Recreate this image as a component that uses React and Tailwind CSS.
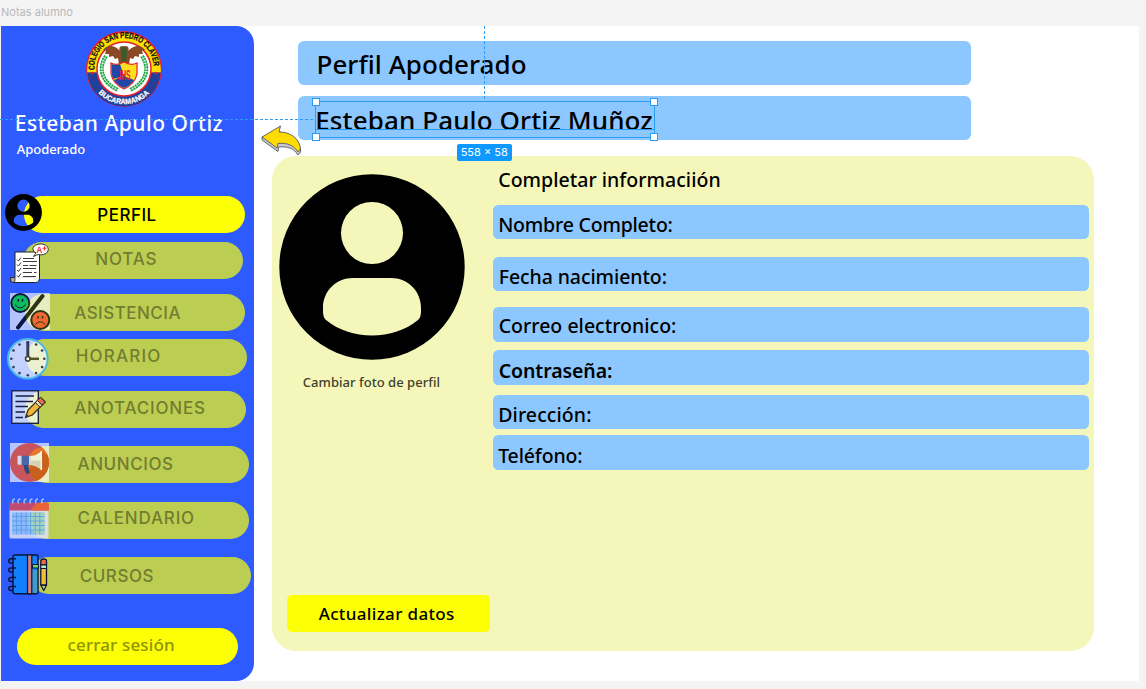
import React from "react";

function AvatarIcon({ className }) {
  return (
    <svg viewBox="0 0 186 186" className={className} fill="#000">
      <path
        fillRule="evenodd"
        d="M93 .3a92.7 92.7 0 1 0 0 185.4A92.7 92.7 0 0 0 93 .3ZM93 28a31 31 0 1 1 0 62a31 31 0 0 1 0-62ZM44 138V134C44 117 57 104 74 104H112C129 104 142 117 142 134V138Q142 143 139 146C127 156 110 161.5 93 161.5C76 161.5 59 156 47 146Q44 143 44 138Z"
      />
    </svg>
  );
}

function Crest() {
  return (
    <svg viewBox="0 0 78 78" className="h-[78px] w-[78px]">
      <circle cx="39" cy="39" r="38" fill="#e8202c" />
      <path d="M2.3 42.5A36.8 36.8 0 1 1 75.7 42.5Z" fill="#ffe000" />
      <path d="M2.3 42.5A36.8 36.8 0 0 0 75.7 42.5Z" fill="#20409a" />
      <circle cx="39" cy="39" r="27.8" fill="#e8202c" />
      <circle cx="39" cy="39" r="26.3" fill="#fff" />
      <circle cx="7" cy="43" r="1.3" fill="#e8202c" />
      <circle cx="71" cy="43" r="1.3" fill="#e8202c" />
      <defs>
        <path id="crest-top" d="M9.6 41A29.6 29.6 0 1 1 68.4 41" />
        <path id="crest-bottom" d="M6.5 52.500A35.200 35.200 0 0 0 71.500 52.500" />
      </defs>
      <text fontFamily="Liberation Sans Narrow, Liberation Sans, sans-serif" fontWeight="700" fontSize="8.4" fill="#111" stroke="#111" strokeWidth=".3">
        <textPath href="#crest-top" startOffset="1" textLength="94" lengthAdjust="spacingAndGlyphs">COLEGIO SAN PEDRO CLAVER</textPath>
      </text>
      <text fontFamily="Liberation Sans Narrow, Liberation Sans, sans-serif" fontWeight="700" fontSize="7.6" fill="#fff" stroke="#fff" strokeWidth=".2">
        <textPath href="#crest-bottom" startOffset="12.500" textLength="57" lengthAdjust="spacingAndGlyphs">BUCARAMANGA</textPath>
      </text>
      <g fill="none" stroke="#1fa345" strokeWidth="4" strokeDasharray="2.200 0.6">
        <path d="M21 26C13 38 16 52 33 60" />
        <path d="M57 26C65 38 62 52 45 60" />
      </g>
      <g fill="none" stroke="#fff" strokeWidth=".6">
        <path d="M21 26C13 38 16 52 33 60" />
        <path d="M57 26C65 38 62 52 45 60" />
      </g>
      <path d="M39 17C42 14 45 18 43 21C49 15 56 14 60 20L57 21L58 24L54 24L54 27L50 26L48 29L45 28L44 35H34L33 28L30 29L28 26L24 27L24 24L20 24L21 21L18 20C22 14 30 15 35 21C33 18 36 14 39 17Z" fill="#8a4a26" />
      <path d="M39 16Q42 17 42 23L41 33H37L36 23Q36 17 39 16Z" fill="#3d5a2a" />
      <path d="M26 33Q32 36 39 32Q46 36 52 33V44Q50 54 39 59Q28 54 26 44Z" fill="#ffdf1b" stroke="#e8202c" strokeWidth="1.2" />
      <path d="M26.6 34Q32 36 35 34L39 46L28.5 49Q26.6 46 26.6 42Z" fill="#2446a8" />
      <path d="M39 46L49 50Q46 55 39 58Q32 55 29 50Z" fill="#2446a8" />
      <text x="39" y="50" textAnchor="middle" fontFamily="Liberation Sans, sans-serif" fontWeight="700" fontSize="14" textLength="13" lengthAdjust="spacingAndGlyphs" fill="#e8202c">JHS</text>
    </svg>
  );
}

function GradesIcon() {
  return (
    <svg viewBox="0 0 40 41" className="h-[41px] w-10" stroke="#222" strokeLinejoin="round">
      <path d="M5 9H29.5V34Q29.5 39.5 25.5 39.5H3Q.7 39.5 .7 37V34.5H5Z" fill="#fff" strokeWidth="1" />
      <path d="M.7 34.5H5V37.5Q4.5 39.5 3 39.5Q.7 39.5 .7 37Z" fill="#aaa" strokeWidth=".8" />
      <path d="M5 34.5H24Q26 39.5 28.5 38" fill="none" strokeWidth=".4" stroke="#bbb" />
      <path d="M23.5 13.5L26 10C20 6.500 23.500 1 30.500 1C36 1 38.200 4 38.200 6.500C38.200 10.500 33 12.700 28 11.500Z" fill="#fff" strokeWidth=".9" />
      <text x="26.300" y="9.700" stroke="none" fill="#f02c35" fontFamily="Liberation Sans, sans-serif" fontWeight="700" fontSize="8.500">A</text>
      <path d="M32.500 5.300h4M34.500 3.300v4" stroke="#f02c35" strokeWidth="1.100" />
      <path d="M7 16.500l1.500 1.500 2.500-3.500M7 21.500l1.500 1.500 2.500-3.500M7 27l1.500 1.500 2.500-3.500M7 32.500l1.500 1.500 2.500-3.500" fill="none" strokeWidth=".9" />
      <path d="M13 15.500h11M13 18.500h14M13 22.500h5m1.500 0h7M13 25.500h13M13 29.500h9m2 0h2.500M13 33.500h13" fill="none" strokeWidth=".9" />
    </svg>
  );
}

function AttendanceIcon() {
  return (
    <svg viewBox="0 0 40 37" className="h-[37px] w-10 opacity-75">
      <rect width="40" height="37" fill="#fff" fillOpacity=".85" />
      <path d="M32.500 3L8 34.500" stroke="#000" strokeWidth="4" strokeLinecap="round" />
      <circle cx="10.300" cy="10" r="9" fill="#00dc28" stroke="#000" strokeWidth="2" />
      <path d="M8.300 6v2.500M12.500 6v2.500" stroke="#000" strokeWidth="1.500" />
      <path d="M5 11.500q5.300 7 10.700 0" fill="none" stroke="#000" strokeWidth="1" />
      <circle cx="30.300" cy="27" r="9" fill="#ff4828" stroke="#000" strokeWidth="2" />
      <path d="M28 23v2.500M32.500 23v2.500" stroke="#000" strokeWidth="1.500" />
      <path d="M25.500 31.500q4.800-5.500 9.600 0" fill="none" stroke="#000" strokeWidth="1" />
    </svg>
  );
}

const clockDots = [[20.8, 4.3], [29.1, 6.5], [35.1, 12.5], [37.3, 20.8], [35.1, 29.1], [29.1, 35.1], [20.8, 37.3], [12.5, 35.1], [6.5, 29.1], [4.3, 20.8], [6.5, 12.5], [12.5, 6.5]];

function ClockIcon() {
  return (
    <svg viewBox="0 0 42 42" className="h-[42px] w-[42px]">
      <circle cx="20.800" cy="20.800" r="19.800" fill="#fff" fillOpacity=".72" stroke="#4cb9e4" strokeWidth="2" />
      {clockDots.map(([x, y]) => (
        <circle key={`${x}-${y}`} cx={x} cy={y} r="1.300" fill="#2f3d55" />
      ))}
      <path d="M20.800 20V3.500" stroke="#343e60" strokeWidth="3" />
      <path d="M21 20.800H32" stroke="#55562c" strokeWidth="2.500" />
      <circle cx="20.800" cy="20.800" r="2.300" fill="#f4f5dc" stroke="#3e4238" strokeWidth="1.600" />
    </svg>
  );
}

function NotesIcon() {
  return (
    <svg viewBox="0 0 36 35" className="h-[35px] w-9">
      <rect x=".8" y=".8" width="26.500" height="32.500" fill="#fff" fillOpacity=".72" stroke="#111d3c" strokeWidth="1.300" />
      <path d="M4.500 6H23M4.500 11.500H22M4.500 16.500H17M4.500 22H14M4.500 27.500H12" stroke="#14204a" strokeWidth="1.400" />
      <path d="M14.500 27.500L17 20L29.500 7.500L34.200 12L21.500 24.800Z" fill="#f0b83f" stroke="#3a3416" strokeWidth="1.300" strokeLinejoin="round" />
      <path d="M26.500 10.500L29.500 7.500L34.200 12L31 15.200Z" fill="#ee6850" stroke="#3a3416" strokeWidth="1" />
      <path d="M24.500 12.500L26.500 10.500L31 15.200L29 17.200Z" fill="#d9dccb" stroke="#3a3416" strokeWidth="1" />
      <path d="M14.500 27.500L15.600 24L18 26.400Z" fill="#3a3416" />
    </svg>
  );
}

function MegaphoneIcon() {
  return (
    <svg viewBox="0 0 39 39" className="h-[39px] w-[39px]">
      <rect width="39" height="39" fill="#fff" fillOpacity=".65" />
      <circle cx="19.500" cy="19.500" r="19.500" fill="#c7555b" />
      <path d="M32 4.600Q18 6 18 22Q18 32 26 37.900A19.500 19.500 0 0 0 32 4.600Z" fill="#e9762c" />
      <path d="M31.500 7.500L37.800 13A19.500 19.500 0 0 1 26 37.900Q21 34 19 28L21 21L31 26Z" fill="#c9601c" />
      <path d="M13.500 21.500H18L20 30L17 31.200Q14 28 13.500 21.500Z" fill="#31497c" />
      <path d="M19 13.500Q27 12.500 31 8.500V26.500Q27 22.500 19 21.800Z" fill="#f2f0d2" />
      <path d="M19 17.700L31 17.500V26.500Q27 22.500 19 21.800Z" fill="#d6d3b4" />
      <path d="M11.500 12.800H19.500V22H11.500Z" fill="#4a66a8" />
      <path d="M19 12.800H21V22H19Z" fill="#d9dcc8" />
      <path d="M7.500 13.800Q7.500 12.800 8.500 12.800H11.500V21.800H8.500Q7.500 21.800 7.500 20.800Z" fill="#d5dbe6" />
      <path d="M31.300 8V27" stroke="#f6f4da" strokeWidth="1.500" />
    </svg>
  );
}

function CalendarIcon() {
  return (
    <svg viewBox="0 0 40 41" className="h-[41px] w-10">
      <path d="M.5 10H39.500V39Q39.500 40.500 37.500 40.500H2.500Q.5 40.500 .5 39Z" fill="#e0e4f2" fillOpacity=".85" />
      <path d="M.3 6Q.3 4.500 2 4.500H38Q39.700 4.500 39.700 6V12.500H.3Z" fill="#bf4b73" />
      <path d="M31 4.500H38Q39.700 4.500 39.700 6V12.500H21.500Q25 6 31 4.500Z" fill="#e8653a" />
      <path d="M3 14.500H35.500V36.500H3Z" fill="#8ab9fd" />
      <path d="M20.500 14.500H35.500V36.500H27Q16 29 20.500 14.500Z" fill="#a5d3bd" />
      <path d="M3 18.500H35.500M3 23H35.500M3 27.500H35.500M3 32H35.500M7.600 14.500V36.500M12.300 14.500V36.500M17 14.500V36.500M21.600 14.500V36.500M26.200 14.500V36.500M30.800 14.500V36.500" stroke="#559be4" strokeWidth=".8" />
      <path d="M4 5.500q-1.500-4 2-4.500M9.500 5.500q-1.500-4 2-4.500M15.500 5.500q-1.500-4 2-4.500M21.500 5.500q-1.500-4 2-4.500M27 5.500q-1.500-4 2-4.500M33 5.500q-1.500-4 2-4.500" fill="none" stroke="#8fc4ee" strokeWidth="1.600" />
    </svg>
  );
}

function CoursesIcon() {
  return (
    <svg viewBox="0 0 40 41" className="h-[41px] w-10" stroke="#0a1433" strokeWidth="1.500" strokeLinejoin="round">
      <rect x="5" y="1" width="25" height="38.800" rx="2" fill="#1180ff" />
      <path d="M23.800 16H29.300V39H23.800Z" fill="#3f9bd0" stroke="none" />
      <path d="M19.500 1h4.300v38.800h-4.300z" fill="#cc7f80" strokeWidth="1.200" />
      <path d="M24.500 10.500H30.500V14H24.500Z" fill="#72d56a" strokeWidth="1" />
      <path d="M8 4.800H3Q.8 4.800 .8 7T3 9H5M8 14H3Q.8 14 .8 16T3 18H5M8 23.500H3Q.8 23.500 .8 25.500T3 27.500H5M8 32.500H3Q.8 32.500 .8 34.500T3 36.500H5" fill="none" />
      <path d="M32.800 31H38.500L35.700 36.500Z" fill="#d8c98a" strokeWidth="1.200" />
      <path d="M32.800 11H38.500V31H32.800Z" fill="#f2bd38" strokeWidth="1.300" />
      <path d="M32.800 7Q32.800 5 35.700 5T38.500 7V11H32.800Z" fill="#f0694c" strokeWidth="1.300" />
      <path d="M32.800 11H38.500V14.500H32.800Z" fill="#b9e6d0" strokeWidth="1" />
    </svg>
  );
}

function BackArrow() {
  return (
    <svg viewBox="0 0 41 32" className="h-8 w-[41px]" strokeLinejoin="round" stroke="#55565e" strokeWidth=".9">
      <path d="M1 13V16L17 27.500L17.500 23C27 22 33 24.500 37 31L39.500 28V24L20 8Z" fill="#c9cbd2" />
      <path d="M1 13L19.500 2L18 8C29 8 38.500 14 39.500 25L37 28C33 21.500 26 18.500 17 19.500L16 24Z" fill="#ffdc00" />
    </svg>
  );
}

function NavItem({ icon, iconClass, className, children }) {
  return (
    <div className={`relative h-[37px] w-[220.500px] shrink-0 rounded-full text-[17px] leading-none ${className}`}>
      {icon && <span className={`absolute ${iconClass}`}>{icon}</span>}
      {children}
    </div>
  );
}

function Field({ className, children }) {
  return (
    <div className={`h-[34.600px] w-[596px] shrink-0 rounded-[5.500px] bg-[#8cc7ff] pl-[5.500px] text-[19.500px] leading-none text-black ${className}`}>
      {children}
    </div>
  );
}

const caps = "font-['Inter',sans-serif]";
const off = "bg-[#bcce52] text-[#727d31] font-['Inter',sans-serif]";

export default function App() {
  return (
    <div className="relative flex h-[689px] w-[1146px] flex-col overflow-hidden whitespace-nowrap bg-[#f4f4f4] font-['Noto_Sans',sans-serif] font-medium">
      <div className="h-[26px] shrink-0 pl-px pt-[6.500px] font-['Inter',sans-serif] text-[11px] font-normal leading-none tracking-[0.020px] text-[#b8b8b8]">
        Notas alumno
      </div>

      <div className="ml-px flex h-[654.500px] w-[1137.500px] shrink-0 bg-white">
        <aside className="flex h-full w-[253.300px] shrink-0 flex-col rounded-r-[18px] bg-[#2e5bff]">
          <div className="ml-[83.700px] mt-[4.200px] h-[78px]">
            <Crest />
          </div>
          <h1 className="ml-[13.700px] mt-[4.800px] text-[21px] font-medium leading-none tracking-[0.520px] text-white">Esteban Apulo Ortiz</h1>
          <p className="ml-[15.800px] mt-[9.500px] text-[13px] leading-none tracking-[-0.050px] text-white">Apoderado</p>

          <nav className="mt-[39.200px] flex flex-col">
            <NavItem icon={<AvatarIcon className="h-[37px] w-[37px]" />} iconClass="-left-[18.800px] -top-[1.500px]" className={`ml-[23px] bg-[#fdff05] pl-[73.300px] pt-[11.700px] tracking-[0.500px] text-black ${caps}`}>PERFIL</NavItem>
            <NavItem icon={<GradesIcon />} iconClass="-left-[12.500px] top-px" className={`ml-[21.500px] mt-[9.500px] pl-[72.800px] pt-[9.100px] tracking-[0.800px] ${off}`}>NOTAS</NavItem>
            <NavItem icon={<AttendanceIcon />} iconClass="-left-[14.500px] -top-[0.500px]" className={`ml-[23.500px] mt-[14.500px] pl-[49.700px] pt-[11.800px] tracking-[0.480px] ${off}`}>ASISTENCIA</NavItem>
            <NavItem icon={<ClockIcon />} iconClass="-left-[19px] -top-[0.800px]" className={`ml-[25px] mt-[8.500px] pl-[49.700px] pt-[9.300px] tracking-[1.200px] ${off}`}>HORARIO</NavItem>
            <NavItem icon={<NotesIcon />} iconClass="-left-[14px] -top-[0.700px]" className={`ml-[24px] mt-[14.700px] pl-[49.200px] pt-[9.500px] tracking-[0.820px] ${off}`}>ANOTACIONES</NavItem>
            <NavItem icon={<MegaphoneIcon />} iconClass="-left-[18px] -top-[3.600px]" className={`ml-[27px] mt-[18.600px] pl-[49.500px] pt-[9.100px] tracking-[0.580px] ${off}`}>ANUNCIOS</NavItem>
            <NavItem icon={<CalendarIcon />} iconClass="-left-[18.800px] -top-[3.500px]" className={`ml-[27px] mt-[18.200px] pl-[49.500px] pt-[8.800px] tracking-[0.820px] ${off}`}>CALENDARIO</NavItem>
            <NavItem icon={<CoursesIcon />} iconClass="-left-[22.500px] -top-[3.500px]" className={`ml-[29px] mt-[18.500px] pl-[49.700px] pt-[11.200px] tracking-[0.550px] ${off}`}>CURSOS</NavItem>
            <NavItem className="ml-[16.300px] mt-[34px] bg-[#fdff05] pl-[50.200px] pt-[8.300px] tracking-[0.150px] text-[#8f9500]">cerrar sesión</NavItem>
          </nav>
        </aside>

        <main className="flex flex-col">
          <div className="ml-[44.200px] mt-[15px] h-[44.300px] w-[672.500px] shrink-0 rounded-[6px] bg-[#8cc7ff] pl-[18px] pt-[10.100px] text-[26px] leading-none tracking-[0.050px] text-black">
            Perfil Apoderado
          </div>
          <div className="ml-[44.200px] mt-[10.700px] h-[44px] w-[672.500px] shrink-0 rounded-[6px] bg-[#8cc7ff] pl-[16.800px] pt-[10.900px] text-[26px] leading-none tracking-[0.110px] text-black">
            Esteban Paulo Ortiz Muñoz
          </div>

          <section className="ml-[17.700px] mt-[15.700px] flex h-[495px] w-[822px] shrink-0 rounded-[24px] bg-[#f5f7ba]">
            <div className="flex w-[220.700px] shrink-0 flex-col">
              <AvatarIcon className="ml-[7px] mt-[18px] h-[186px] w-[186px] shrink-0" />
              <p className="ml-[30.800px] mt-[16.700px] text-[13px] leading-none tracking-[0.040px] text-[#3e3f2c]">Cambiar foto de perfil</p>
              <button className="ml-[14.700px] mt-[205.600px] h-[37.300px] w-[203px] shrink-0 rounded-[5px] bg-[#fdff05] pb-[0.500px] pr-[3px] text-center text-[17px] font-medium leading-none tracking-[0.350px] text-black">
                Actualizar datos
              </button>
            </div>
            <div className="flex flex-col">
              <h2 className="mt-[14.700px] pl-[5.600px] text-[19.500px] font-medium leading-none tracking-[0.030px] text-black">Completar informaciión</h2>
              <Field className="mt-[14.800px] pt-[10.400px] tracking-[-0.200px]">Nombre Completo:</Field>
              <Field className="ml-[0.500px] mt-[17.400px] pt-[10.700px] tracking-[-0.080px]">Fecha nacimiento:</Field>
              <Field className="ml-[0.500px] mt-[15.700px] pt-[9px] tracking-[0.020px]">Correo electronico:</Field>
              <Field className="ml-[0.500px] mt-[8.400px] pt-[11.100px] font-semibold tracking-[-0.080px]">Contraseña:</Field>
              <Field className="mt-[10.100px] pt-[10.700px] tracking-[0.100px]">Dirección:</Field>
              <Field className="mt-[6px] pt-[11px] tracking-[-0.150px]">Teléfono:</Field>
            </div>
          </section>
        </main>
      </div>

      <div className="absolute left-[261px] top-[124px]">
        <BackArrow />
      </div>

      <div className="absolute left-0 top-[119px] h-px w-[315px] bg-[repeating-linear-gradient(90deg,#2b9cf5_0_3px,transparent_3px_5px)]" />
      <div className="absolute left-[484px] top-[26px] h-[75px] w-px bg-[repeating-linear-gradient(180deg,#2b9cf5_0_3px,transparent_3px_5px)]" />
      <div className="absolute left-[315px] top-[101px] h-[37px] w-[340px] border border-[#2b9cf5]">
        <div className="mt-[27px] h-px w-full bg-[#2b9cf5]" />
        <span className="absolute -left-1 -top-1 size-2 border border-[#2b9cf5] bg-white" />
        <span className="absolute -right-1 -top-1 size-2 border border-[#2b9cf5] bg-white" />
        <span className="absolute -bottom-1 -left-1 size-2 border border-[#2b9cf5] bg-white" />
        <span className="absolute -bottom-1 -right-1 size-2 border border-[#2b9cf5] bg-white" />
      </div>
      <div className="absolute left-[457px] top-[144px] flex h-[17px] w-[54.500px] items-center justify-center rounded-[2px] bg-[#0d99ff] font-['Inter',sans-serif] text-[11px] font-normal leading-none text-white">
        558 × 58
      </div>
    </div>
  );
}
